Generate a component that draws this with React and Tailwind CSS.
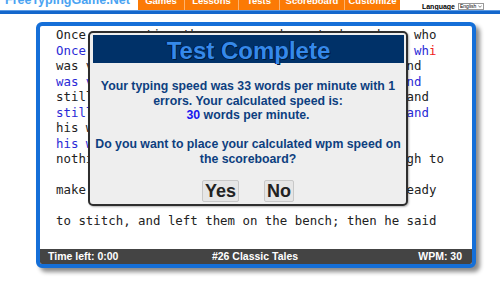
import React from "react";

const rows = [
  { o: "Once upon a time there was an honest shoemaker, who", t: "Once upon a time there was an honest shoemaker, wh", bad: "i" },
  { o: "was very poor and worked very hard every day, and", t: "was very poor and worked very hard every day, and" },
  { o: "still he could never earn enough to live upon; and", t: "still he could never earn enough to live upon; and" },
  { o: "his whole fortune was reduced to a few scraps", t: "his whole fortune was reduced to a few scraps" },
  { o: "nothing left in the world but just leather enough to", t: "" },
  { o: "make a single pair of shoes. He cut them out, ready", t: "" },
  { o: "to stitch, and left them on the bench; then he said", t: "" },
];

const tabs = [
  { label: "Games", w: "w-[46px]" },
  { label: "Lessons", w: "w-[54px]" },
  { label: "Tests", w: "w-[41px]" },
  { label: "Scoreboard", w: "w-[65px]" },
  { label: "Customize", w: "w-[56px]" },
];

export default function App() {
  return (
    <div className="w-[500px] h-[283px] bg-white overflow-hidden relative font-['Liberation_Sans',Arial,sans-serif]">
      {/* Header */}
      <div className="h-[10px] overflow-hidden flex">
        <div className="w-[138px] pl-[5px]">
          <div className="-mt-[6px] text-[12.5px] leading-[12px] font-bold text-[#4aa3f2] whitespace-nowrap">
            FreeTypingGame.Net
          </div>
        </div>
        <div className="flex bg-[#fb7a05] h-[10px]">
          {tabs.map((t, i) => (
            <div
              key={t.label}
              className={`${t.w} h-[10px] flex justify-center ${i > 0 ? "border-l border-[#fdb36e]" : ""}`}
            >
              <span className="-mt-[4px] text-[9.5px] leading-[10px] font-bold text-white whitespace-nowrap">
                {t.label}
              </span>
            </div>
          ))}
        </div>
        <div className="flex-1 flex items-start justify-end pr-[16px] pt-[3px] gap-[3px]">
          <span className="text-[7px] leading-[7px] font-bold text-black">Language</span>
          <div className="w-[26px] h-[7px] border border-[#999] bg-white flex items-center justify-between px-[1px]">
            <span className="text-[5px] leading-[5px] text-black">English</span>
            <svg width="4" height="3" viewBox="0 0 4 3">
              <path d="M0.3 0.5 L2 2.3 L3.7 0.5" stroke="#333" strokeWidth="0.6" fill="none" />
            </svg>
          </div>
        </div>
      </div>
      <div className="h-[4px] bg-[#1467cc] border-t border-[#5b9ae4]" />

      {/* Main box */}
      <div className="ml-[36px] mt-[8px] w-[440px] h-[246px] border-4 border-[#156fd8] rounded-[6px] bg-white shadow-[4px_4px_4px_rgba(0,0,0,0.45)] relative flex flex-col">
        <div className="flex-1 overflow-hidden pl-[16px] pt-[1.25px] font-['DejaVu_Sans_Mono',monospace] text-[12.4px] leading-[15.5px]">
          {rows.map((r, i) => (
            <div key={i} className="h-[31px]">
              <div className="whitespace-pre text-[#222]">{r.o}</div>
              <div className="whitespace-pre text-[#2a2ad6]">
                {r.t}
                {r.bad ? <span className="text-[#f02020]">{r.bad}</span> : null}
              </div>
            </div>
          ))}
        </div>
        <div className="h-[15px] bg-[#444444] grid grid-cols-3 items-center pl-[8px] pr-[10px] text-white font-bold text-[10.5px] leading-[15px] rounded-b-[2px]">
          <span>Time left: 0:00</span>
          <span className="text-center">#26 Classic Tales</span>
          <span className="text-right">WPM: 30</span>
        </div>

        {/* Dialog */}
        <div className="absolute left-[48px] top-[5px] w-[320px] h-[175px] border-2 border-[#2e2e2e] rounded-[5px] bg-[#eeeeee] p-[2px] shadow-[1px_1px_2px_rgba(0,0,0,0.3)] flex flex-col">
          <div className="h-[28px] ml-[1px] bg-[#003168] text-center pt-[4px] text-[24px] leading-[24px] font-bold text-[#3589ea] [text-shadow:1px_1px_0_#001a3a,-1px_0_0_#001a3a]">
            Test Complete
          </div>
          <div className="pt-[16px] text-center font-bold text-[12.3px] leading-[14.5px] text-[#0d3f80]">
            <p>
              Your typing speed was 33 words per minute with 1 errors. Your calculated speed is:
              <br />
              <span className="text-[#1616ee]">30</span> words per minute.
            </p>
            <p className="mt-[14.5px]">
              Do you want to place your calculated wpm speed on the scoreboard?
            </p>
          </div>
          <div className="mt-[14px] flex justify-center gap-[25px]">
            <button className="h-[22px] px-[2px] w-[37px] border border-[#c8c8c8] bg-[#e6e6e6] rounded-[2px] text-[18px] leading-[20px] font-bold text-[#222]">
              Yes
            </button>
            <button className="h-[22px] px-[2px] w-[30px] border border-[#c8c8c8] bg-[#e6e6e6] rounded-[2px] text-[18px] leading-[20px] font-bold text-[#222]">
              No
            </button>
          </div>
        </div>
      </div>
    </div>
  );
}
